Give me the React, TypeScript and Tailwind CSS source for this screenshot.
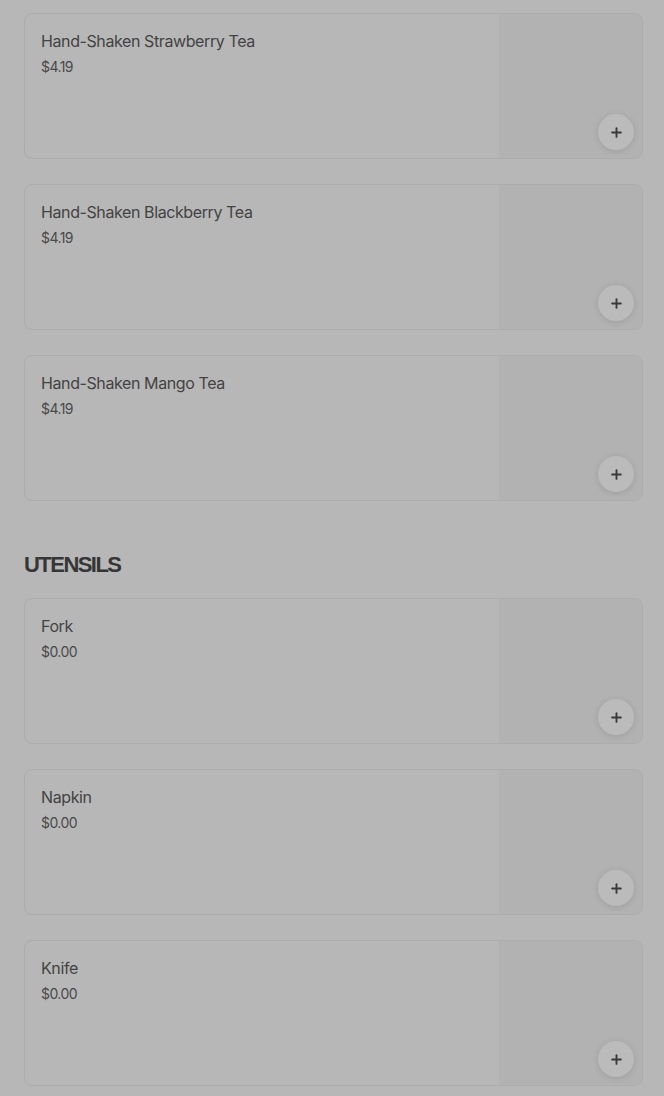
import { Plus } from 'lucide-react'

interface MenuItem {
  name: string
  price: string
}

const teas: MenuItem[] = [
  { name: 'Hand-Shaken Strawberry Tea', price: '$4.19' },
  { name: 'Hand-Shaken Blackberry Tea', price: '$4.19' },
  { name: 'Hand-Shaken Mango Tea', price: '$4.19' },
]

const utensils: MenuItem[] = [
  { name: 'Fork', price: '$0.00' },
  { name: 'Napkin', price: '$0.00' },
  { name: 'Knife', price: '$0.00' },
]

function ItemCard({ item }: { item: MenuItem }) {
  return (
    <div className="flex h-[146px] overflow-hidden rounded-lg border border-[#acacac] bg-[#b7b7b7]">
      <div className="flex-1 px-4 pt-[15px]">
        <h3 className="text-[16px] leading-6 tracking-[-0.025em] text-[#434343]">{item.name}</h3>
        <p className="mt-1 text-[14px] leading-5 tracking-[-0.04em] text-[#4a4a4a]">{item.price}</p>
      </div>
      <div className="flex w-[143px] items-end justify-end bg-[#b2b2b2] p-2">
        <button
          type="button"
          className="flex h-9 w-9 items-center justify-center rounded-full bg-[#bbbbbb] text-[#3a3a3a] shadow-[0_1px_6px_rgba(0,0,0,0.12)]"
        >
          <Plus className="h-[15px] w-[15px]" strokeWidth={3} aria-hidden="true" />
        </button>
      </div>
    </div>
  )
}

export default function App() {
  return (
    <div
      className="min-h-[1096px] bg-[#b7b7b7] pt-[13px] pr-[21px] pb-2 pl-6"
      style={{ fontFamily: 'Inter, "Noto Sans", sans-serif' }}
    >
      <section className="flex flex-col gap-[25px]">
        {teas.map((item) => (
          <ItemCard key={item.name} item={item} />
        ))}
      </section>

      <h2
        className="mt-[50px] mb-[19px] text-[22px] font-bold leading-7 tracking-[-0.07em] text-[#363636]"
        style={{ fontFamily: '"Liberation Sans", Arial, sans-serif' }}
      >
        UTENSILS
      </h2>

      <section className="flex flex-col gap-[25px]">
        {utensils.map((item) => (
          <ItemCard key={item.name} item={item} />
        ))}
      </section>
    </div>
  )
}
